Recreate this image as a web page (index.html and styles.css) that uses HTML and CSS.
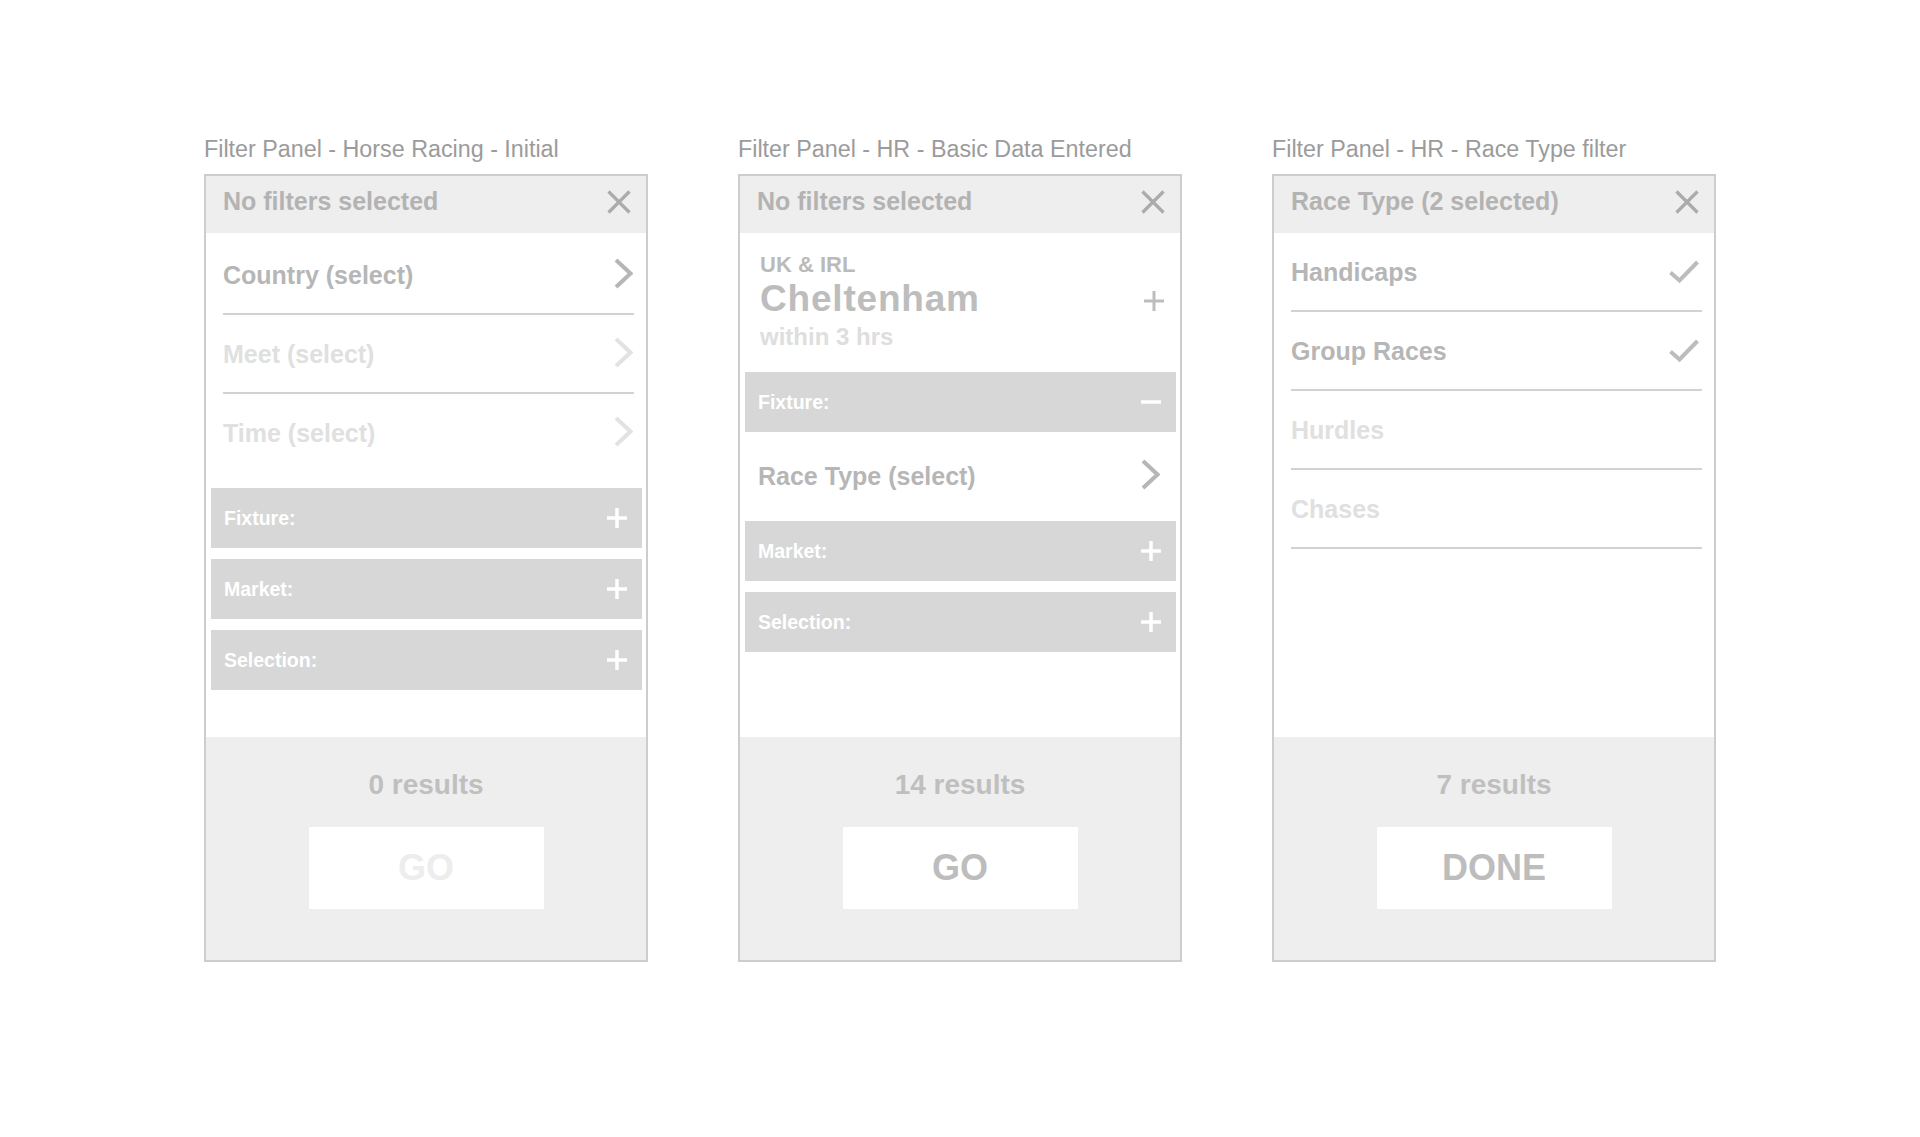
FILE: index.html
```html
<!DOCTYPE html>
<html lang="en">
<head>
<meta charset="utf-8">
<title>Filter Panels</title>
<link rel="stylesheet" href="styles.css">
</head>
<body>
<div class="board">

  <section class="column">
    <div class="caption">Filter Panel - Horse Racing - Initial</div>
    <div class="panel">
      <div class="head">
        <span class="head-text">No filters selected</span>
        <svg class="ico-x" width="24" height="24" viewBox="0 0 24 24"><path d="M1.5 1.5 L22.5 22.5 M22.5 1.5 L1.5 22.5" /></svg>
      </div>
      <div class="body">
        <ul class="list list-first">
          <li class="row on"><span>Country (select)</span><svg class="chev" width="19" height="31" viewBox="0 0 19 31"><path d="M2 2 L16.5 15.5 L2 29" /></svg></li>
          <li class="row off"><span>Meet (select)</span><svg class="chev" width="19" height="31" viewBox="0 0 19 31"><path d="M2 2 L16.5 15.5 L2 29" /></svg></li>
          <li class="row off last"><span>Time (select)</span><svg class="chev" width="19" height="31" viewBox="0 0 19 31"><path d="M2 2 L16.5 15.5 L2 29" /></svg></li>
        </ul>
        <div class="bars bars-p1">
          <div class="bar"><span>Fixture:</span><svg class="bar-ico" width="22" height="22" viewBox="0 0 22 22"><path d="M11 1 V21 M1 11 H21" /></svg></div>
          <div class="bar"><span>Market:</span><svg class="bar-ico" width="22" height="22" viewBox="0 0 22 22"><path d="M11 1 V21 M1 11 H21" /></svg></div>
          <div class="bar"><span>Selection:</span><svg class="bar-ico" width="22" height="22" viewBox="0 0 22 22"><path d="M11 1 V21 M1 11 H21" /></svg></div>
        </div>
      </div>
      <div class="foot">
        <div class="results">0 results</div>
        <div class="btn disabled">GO</div>
      </div>
    </div>
  </section>

  <section class="column">
    <div class="caption">Filter Panel - HR - Basic Data Entered</div>
    <div class="panel">
      <div class="head">
        <span class="head-text">No filters selected</span>
        <svg class="ico-x" width="24" height="24" viewBox="0 0 24 24"><path d="M1.5 1.5 L22.5 22.5 M22.5 1.5 L1.5 22.5" /></svg>
      </div>
      <div class="body">
        <div class="venue">
          <div class="venue-text">
            <div class="venue-country">UK &amp; IRL</div>
            <div class="venue-name">Cheltenham</div>
            <div class="venue-time">within 3 hrs</div>
          </div>
          <svg class="venue-plus" width="22" height="22" viewBox="0 0 22 22"><path d="M11 1 V21 M1 11 H21" /></svg>
        </div>
        <div class="bar"><span>Fixture:</span><svg class="bar-ico" width="22" height="22" viewBox="0 0 22 22"><path d="M1 11 H21" /></svg></div>
        <div class="row-plain on"><span>Race Type (select)</span><svg class="chev" width="19" height="31" viewBox="0 0 19 31"><path d="M2 2 L16.5 15.5 L2 29" /></svg></div>
        <div class="bars">
          <div class="bar"><span>Market:</span><svg class="bar-ico" width="22" height="22" viewBox="0 0 22 22"><path d="M11 1 V21 M1 11 H21" /></svg></div>
          <div class="bar"><span>Selection:</span><svg class="bar-ico" width="22" height="22" viewBox="0 0 22 22"><path d="M11 1 V21 M1 11 H21" /></svg></div>
        </div>
      </div>
      <div class="foot">
        <div class="results">14 results</div>
        <div class="btn">GO</div>
      </div>
    </div>
  </section>

  <section class="column">
    <div class="caption">Filter Panel - HR - Race Type filter</div>
    <div class="panel">
      <div class="head">
        <span class="head-text">Race Type (2 selected)</span>
        <svg class="ico-x" width="24" height="24" viewBox="0 0 24 24"><path d="M1.5 1.5 L22.5 22.5 M22.5 1.5 L1.5 22.5" /></svg>
      </div>
      <div class="body">
        <ul class="list">
          <li class="row on"><span>Handicaps</span><svg class="check" width="30" height="23" viewBox="0 0 30 23"><path d="M1.5 12.5 L10.5 20.5 L28.5 2" /></svg></li>
          <li class="row on"><span>Group Races</span><svg class="check" width="30" height="23" viewBox="0 0 30 23"><path d="M1.5 12.5 L10.5 20.5 L28.5 2" /></svg></li>
          <li class="row off"><span>Hurdles</span></li>
          <li class="row off"><span>Chases</span></li>
        </ul>
      </div>
      <div class="foot">
        <div class="results">7 results</div>
        <div class="btn">DONE</div>
      </div>
    </div>
  </section>

</div>
</body>
</html>
```

FILE: styles.css
```css
html, body {
  margin: 0;
  padding: 0;
  background: #ffffff;
}

body {
  font-family: "Liberation Sans", Arial, sans-serif;
  width: 1920px;
  height: 1137px;
  overflow: hidden;
}

.board {
  display: flex;
  gap: 90px;
  padding: 135px 0 0 204px;
}

.column {
  width: 444px;
  display: flex;
  flex-direction: column;
}

.caption {
  font-size: 23.3px;
  line-height: 28px;
  color: #9b9b9b;
  margin-bottom: 11px;
  white-space: nowrap;
}

.panel {
  width: 444px;
  height: 788px;
  box-sizing: border-box;
  border: 2px solid #cdcdcd;
  display: flex;
  flex-direction: column;
  background: #ffffff;
}

.head {
  height: 57px;
  flex: none;
  box-sizing: border-box;
  background: #eeeeee;
  display: flex;
  align-items: center;
  justify-content: space-between;
  padding: 0 15px 6px 17px;
}

.head-text {
  font-size: 25px;
  font-weight: bold;
  color: #b3b3b3;
  white-space: nowrap;
}

.ico-x path {
  fill: none;
  stroke: #ababab;
  stroke-width: 3.2;
}

.body {
  flex: 1;
  display: flex;
  flex-direction: column;
}

.list {
  list-style: none;
  margin: 0 12px 0 17px;
  padding: 0;
}

.list-first {
  margin-top: 3px;
}

.row {
  height: 79px;
  box-sizing: border-box;
  padding-top: 2px;
  border-bottom: 2px solid #d2d2d2;
  display: flex;
  align-items: center;
  justify-content: space-between;
  font-size: 25px;
  font-weight: bold;
  white-space: nowrap;
}

.row.last {
  border-bottom-color: transparent;
}

.on {
  color: #b6b6b6;
}

.off {
  color: #e0e0e0;
}

.chev {
  margin-bottom: 4px;
  margin-right: 1px;
}

.chev path {
  fill: none;
  stroke-width: 4;
  stroke-linejoin: miter;
}

.on .chev path {
  stroke: #b6b6b6;
}

.off .chev path {
  stroke: #e2e2e2;
}

.check {
  margin-right: 3px;
  margin-bottom: 2px;
}

.check path {
  fill: none;
  stroke: #bcbcbc;
  stroke-width: 4;
}

.bars {
  display: flex;
  flex-direction: column;
  gap: 11px;
}

.bars-p1 {
  margin-top: 15px;
}

.bar {
  height: 60px;
  flex: none;
  margin: 0 4px 0 5px;
  background: #d7d7d7;
  box-sizing: border-box;
  padding: 0 14px 0 13px;
  display: flex;
  align-items: center;
  justify-content: space-between;
  font-size: 19.5px;
  font-weight: bold;
  color: #ffffff;
}

.bar-ico path {
  fill: none;
  stroke: #ffffff;
  stroke-width: 3.5;
}

.venue {
  height: 139px;
  box-sizing: border-box;
  padding: 18px 15px 0 20px;
  display: flex;
  align-items: flex-start;
  justify-content: space-between;
}

.venue-text {
  display: flex;
  flex-direction: column;
  font-weight: bold;
  white-space: nowrap;
}

.venue-country {
  font-size: 22px;
  line-height: 28px;
  color: #bababa;
}

.venue-name {
  font-size: 37px;
  line-height: 40px;
  letter-spacing: 0.8px;
  color: #bdbdbd;
}

.venue-time {
  font-size: 24px;
  line-height: 36px;
  color: #dedede;
}

.venue-plus {
  margin-top: 39px;
}

.venue-plus path {
  fill: none;
  stroke: #bdbdbd;
  stroke-width: 3;
}

.row-plain {
  height: 89px;
  box-sizing: border-box;
  padding: 0 19px 0 18px;
  display: flex;
  align-items: center;
  justify-content: space-between;
  font-size: 25px;
  font-weight: bold;
  white-space: nowrap;
}

.row-plain .chev {
  margin-bottom: 5px;
}

.foot {
  height: 223px;
  flex: none;
  background: #eeeeee;
  display: flex;
  flex-direction: column;
  align-items: center;
  box-sizing: border-box;
  padding-top: 31px;
}

.results {
  font-size: 28px;
  line-height: 34px;
  font-weight: bold;
  color: #bfbfbf;
}

.btn {
  margin-top: 25px;
  width: 235px;
  height: 82px;
  background: #ffffff;
  display: flex;
  align-items: center;
  justify-content: center;
  font-size: 36px;
  font-weight: bold;
  color: #bdbdbd;
}

.btn.disabled {
  color: #ededed;
}
```
